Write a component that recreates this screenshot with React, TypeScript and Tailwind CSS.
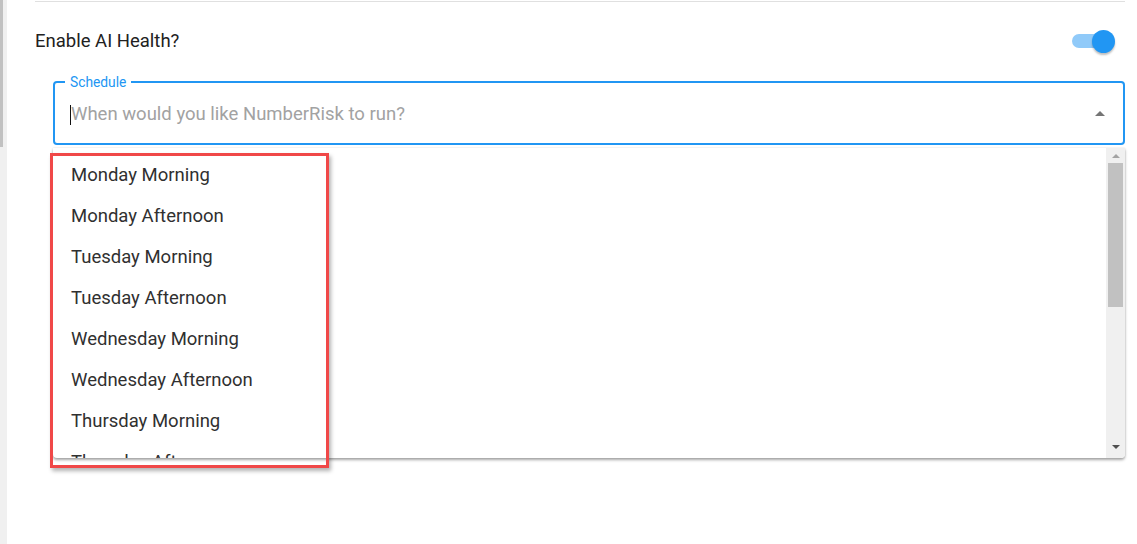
import React from 'react'

const options = [
  'Monday Morning',
  'Monday Afternoon',
  'Tuesday Morning',
  'Tuesday Afternoon',
  'Wednesday Morning',
  'Wednesday Afternoon',
  'Thursday Morning',
  'Thursday Afternoon',
]

function Toggle() {
  return (
    <div className="relative h-[23px] w-[43px]">
      <div className="absolute left-0 top-[4px] h-[14px] w-[34px] rounded-full bg-[#90caf9]" />
      <div className="absolute left-[20px] top-0 h-[23px] w-[23px] rounded-full bg-[#2196f3] shadow-[0_2px_2px_rgba(0,0,0,0.25)]" />
    </div>
  )
}

function Triangle({ down, className }: { down?: boolean; className: string }) {
  return (
    <svg viewBox="0 0 10 5" className={className}>
      <path d={down ? 'M0 0 L10 0 L5 5 Z' : 'M0 5 L5 0 L10 5 Z'} fill="currentColor" />
    </svg>
  )
}

export default function App() {
  return (
    <div className="relative flex h-[544px] w-[1137px] overflow-hidden bg-white font-['Roboto',sans-serif]">
      {/* page scrollbar */}
      <div className="flex w-[7px] bg-[#f0f0f0]">
        <div className="h-[147px] w-[3px] bg-[#c1c1c1]" />
      </div>

      <div className="flex flex-1 flex-col pl-[28px] pr-[12px]">
        <div className="mt-px h-px bg-[#e0e0e0]" />

        {/* enable row */}
        <div className="mt-[28px] flex h-[23px] items-center justify-between pr-[10px]">
          <span className="text-[18.5px] leading-[23px] text-[#212121]">Enable AI Health?</span>
          <Toggle />
        </div>

        {/* schedule field */}
        <div className="relative ml-[18px] mt-[28px] flex h-[64px] items-center rounded-[4px] border-2 border-[#2196f3] pl-[15px] pr-[18px]">
          <span className="absolute -top-[10px] left-[10px] bg-white px-[5px] text-[13.8px] leading-[18px] text-[#2196f3]">
            Schedule
          </span>
          <span className="mt-[3px] h-[20px] w-px bg-[#111]" />
          <span className="mt-[3px] flex-1 text-[18.5px] text-[#a2a2a2]">When would you like NumberRisk to run?</span>
          <Triangle className="h-[5px] w-[10px] text-[#757575]" />
        </div>

        {/* dropdown list */}
        <div className="ml-[18px] mt-[3px] flex h-[310px] overflow-hidden rounded-b-[4px] bg-white shadow-[0_2px_3px_rgba(0,0,0,0.35),0_0_2px_rgba(0,0,0,0.12)]">
          <ul className="flex-1 pt-[7px]">
            {options.map((o) => (
              <li key={o} className="flex h-[41px] items-center pl-[18px] text-[18.5px] text-[#303030]">
                {o}
              </li>
            ))}
          </ul>
          <div className="flex w-[19px] flex-col items-center bg-[#f0f0f0]">
            <Triangle className="mt-[6px] h-[4px] w-[8px] text-[#a3a3a3]" />
            <div className="mt-[5px] h-[144px] w-[15px] bg-[#c1c1c1]" />
            <div className="flex-1" />
            <Triangle down className="mb-[9px] h-[4px] w-[8px] text-[#505050]" />
          </div>
        </div>
      </div>

      {/* annotation highlight */}
      <div className="pointer-events-none absolute left-[50px] top-[153px] h-[315px] w-[279px] border-[3px] border-[#f04848] shadow-[2px_3px_4px_rgba(0,0,0,0.3)]" />
    </div>
  )
}
